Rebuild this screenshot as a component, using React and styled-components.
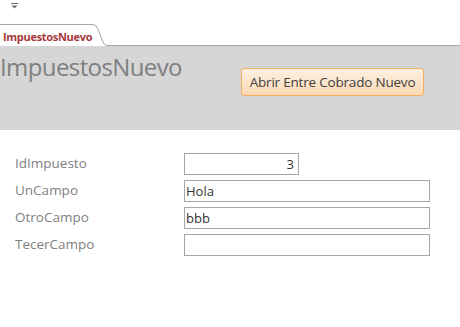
import React from "react";
import styled, { createGlobalStyle } from "styled-components";

const Global = createGlobalStyle`
  html, body { margin: 0; padding: 0; background: #ffffff; }
  body { font-family: "Open Sans", "Noto Sans", sans-serif; width: 460px; height: 327px; overflow: hidden; }
`;

const Page = styled.div`
  width: 460px;
  height: 327px;
  display: flex;
  flex-direction: column;
  background: #ffffff;
`;

const QuickBar = styled.div`
  height: 24px;
  display: flex;
  align-items: flex-start;
  padding: 3px 0 0 11px;
  box-sizing: border-box;
`;

const TabStrip = styled.div`
  height: 22px;
  display: flex;
  align-items: stretch;
`;

const Tab = styled.div`
  display: flex;
  align-items: center;
  padding: 1px 0 0 3px;
  width: 88px;
  box-sizing: border-box;
  border-top: 1px solid #a8a8a8;
  font-size: 11px;
  font-weight: 700;
  color: #a4373a;
  letter-spacing: -0.3px;
`;

const TabCurve = styled.svg`
  width: 20px;
  height: 22px;
  flex: none;
`;

const TabRest = styled.div`
  flex: 1;
  border-bottom: 1px solid #a8a8a8;
`;

const Header = styled.div`
  height: 84px;
  background: #d6d6d6;
  display: flex;
  align-items: flex-start;
`;

const Title = styled.div`
  font-size: 24px;
  line-height: 30px;
  color: #7f7f7f;
  margin: 6px 0 0 0;
  letter-spacing: -0.6px;
  width: 241px;
  flex: none;
  white-space: nowrap;
`;

const ActionButton = styled.button`
  margin-top: 22px;
  height: 28px;
  width: 183px;
  box-sizing: border-box;
  border: 1px solid #f6ae61;
  border-radius: 3px;
  background: linear-gradient(#fdf0e2, #fdd9b4);
  font-family: "Open Sans", "Noto Sans", sans-serif;
  font-size: 13.5px;
  color: #404040;
  padding: 0;
  letter-spacing: -0.2px;
`;

const Form = styled.div`
  display: flex;
  flex-direction: column;
  gap: 5px;
  padding: 23px 0 0 15px;
`;

const Row = styled.div`
  display: flex;
  align-items: center;
  height: 22px;
`;

const Label = styled.div`
  width: 169px;
  font-size: 13.5px;
  color: #7f7f7f;
  margin-top: -3px;
`;

const Field = styled.div`
  width: ${(p) => p.$w}px;
  height: 22px;
  box-sizing: border-box;
  border: 1px solid #a6a6a6;
  font-size: 13px;
  color: #333333;
  display: flex;
  align-items: center;
  justify-content: ${(p) => (p.$right ? "flex-end" : "flex-start")};
  padding: ${(p) => (p.$right ? "0 4px 0 0" : "0 0 0 1px")};
`;

const fields = [
  { label: "IdImpuesto", value: "3", w: 115, right: true },
  { label: "UnCampo", value: "Hola", w: 246 },
  { label: "OtroCampo", value: "bbb", w: 246 },
  { label: "TecerCampo", value: "", w: 246 },
];

export default function App() {
  return (
    <Page>
      <Global />
      <QuickBar>
        <svg width="7" height="6" viewBox="0 0 7 6">
          <rect x="0" y="0" width="7" height="1" fill="#6d6d6d" />
          <path d="M0.5 2.5 L6.5 2.5 L3.5 5.5 Z" fill="#6d6d6d" />
        </svg>
      </QuickBar>
      <TabStrip>
        <Tab>ImpuestosNuevo</Tab>
        <TabCurve viewBox="0 0 20 22">
          <path d="M0 0.5 L5 0.5 Q8 0.5 9.5 4 L14.5 17 Q16 21.5 19 21.5 L20 21.5" fill="none" stroke="#a8a8a8" strokeWidth="1" />
        </TabCurve>
        <TabRest />
      </TabStrip>
      <Header>
        <Title>ImpuestosNuevo</Title>
        <ActionButton>Abrir Entre Cobrado Nuevo</ActionButton>
      </Header>
      <Form>
        {fields.map((f) => (
          <Row key={f.label}>
            <Label>{f.label}</Label>
            <Field $w={f.w} $right={f.right}>{f.value}</Field>
          </Row>
        ))}
      </Form>
    </Page>
  );
}
